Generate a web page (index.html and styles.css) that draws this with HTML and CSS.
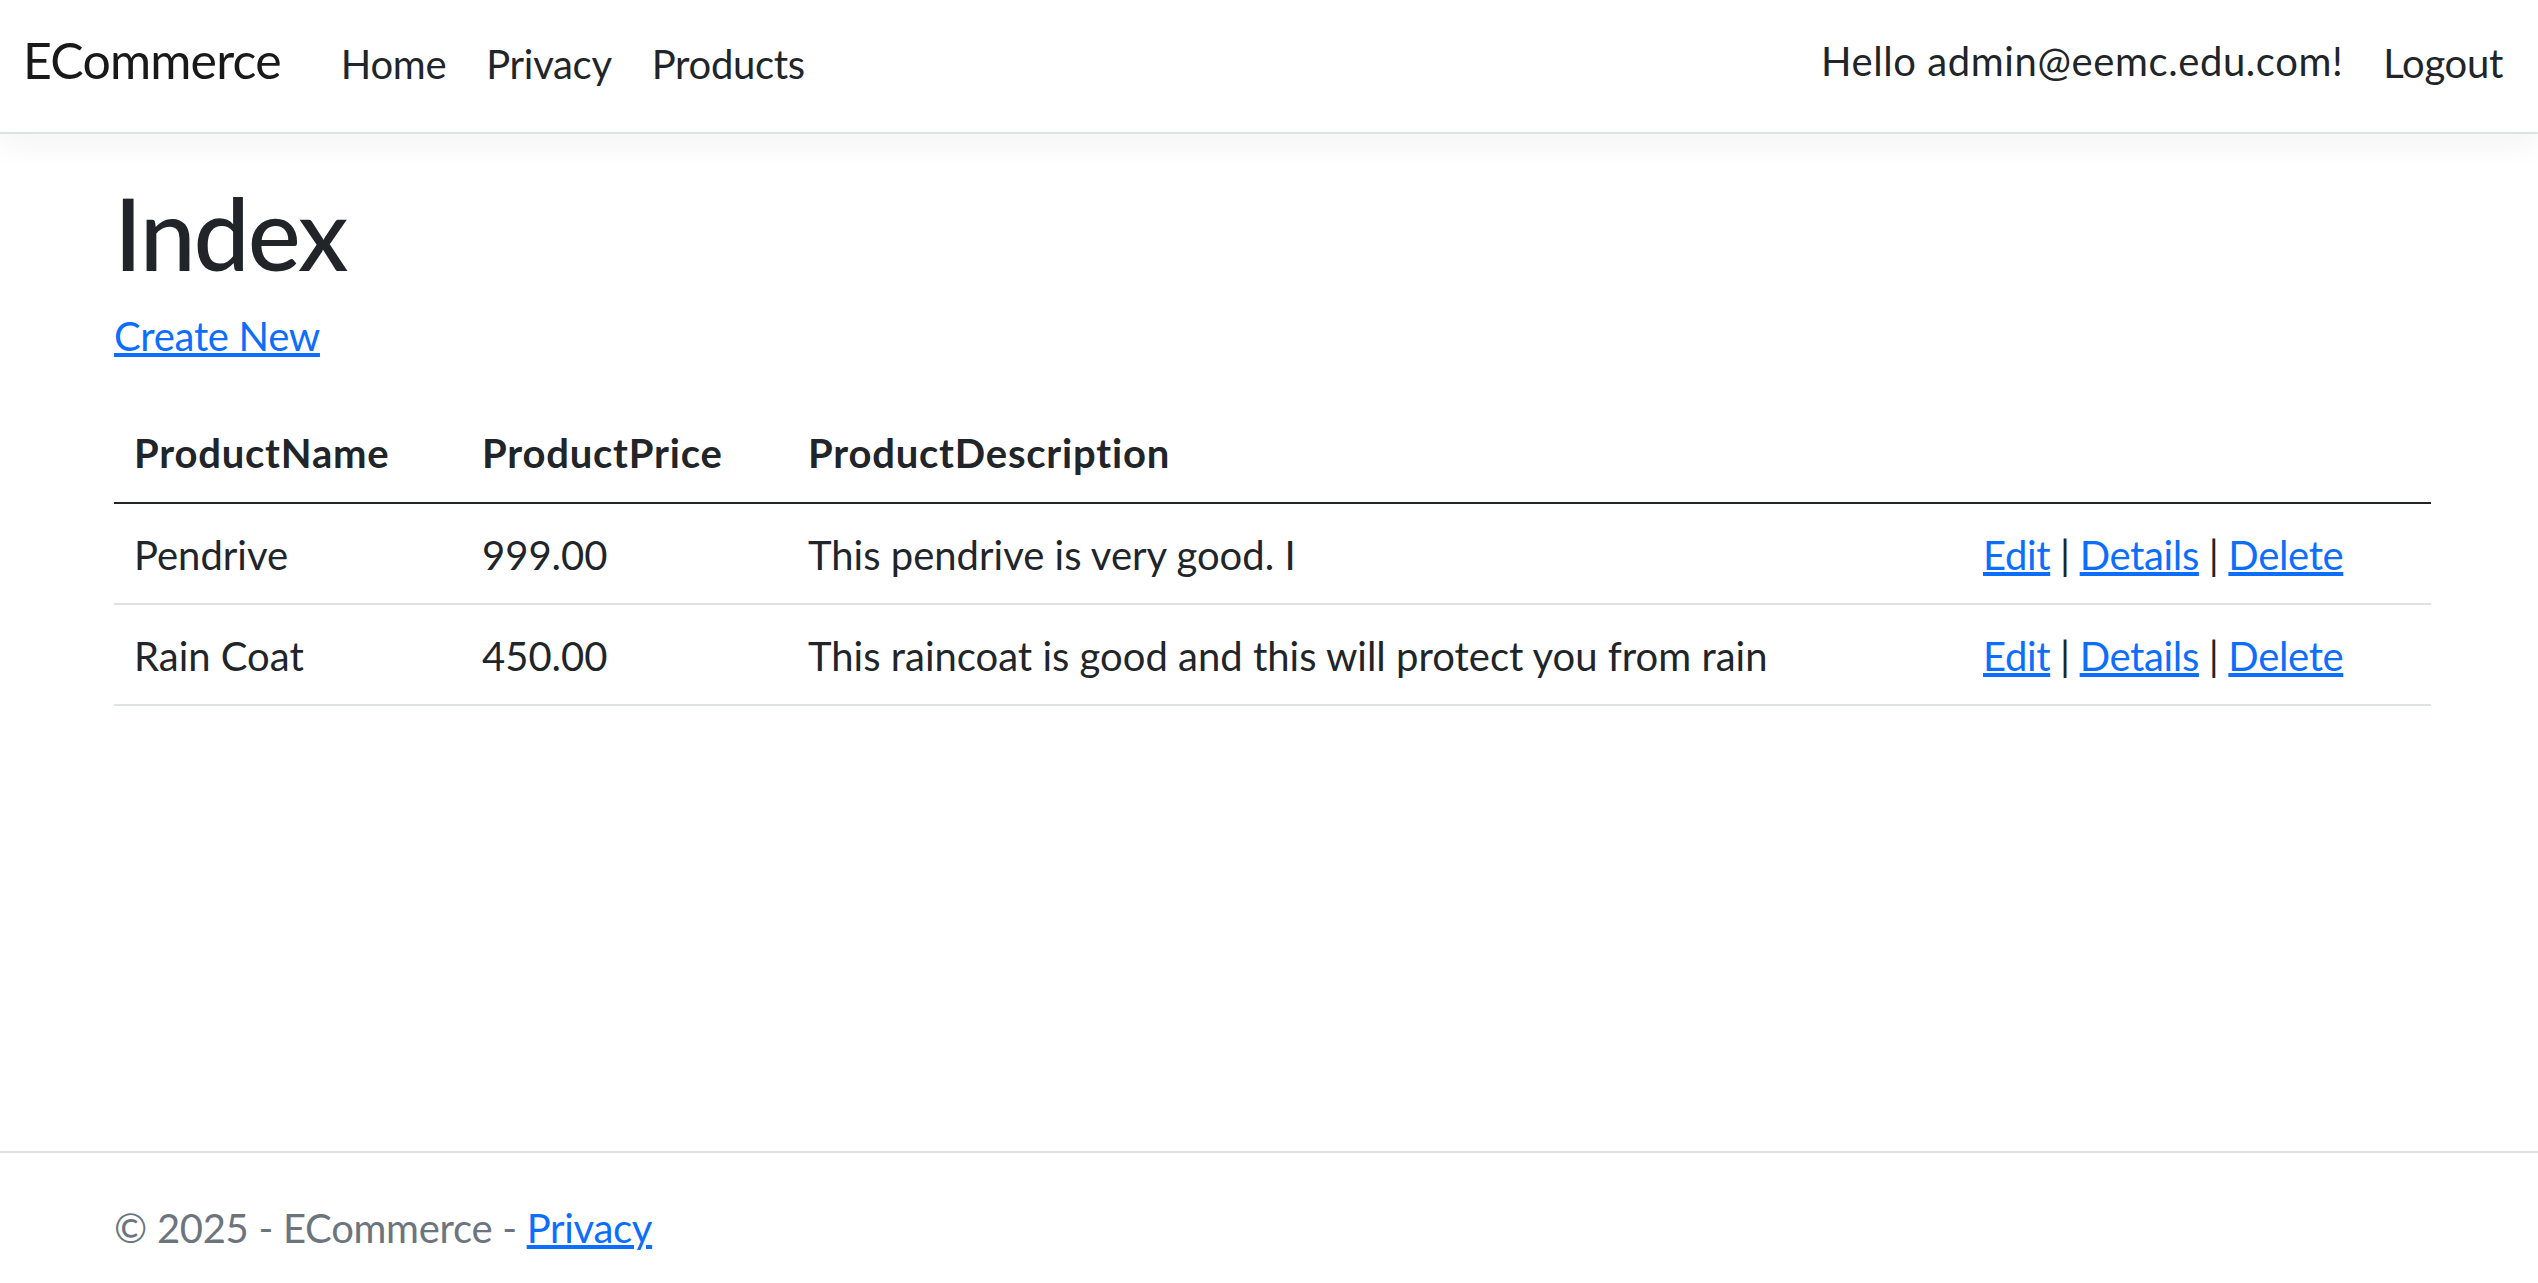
FILE: index.html
```html
<!DOCTYPE html>
<html lang="en">
<head>
<meta charset="utf-8">
<title>Index - ECommerce</title>
<link rel="stylesheet" href="styles.css">
</head>
<body>
<header class="navbar">
  <div class="nav-left">
    <a class="brand" href="#">ECommerce</a>
    <nav class="nav-links">
      <a class="nav-link" href="#">Home</a>
      <a class="nav-link" href="#">Privacy</a>
      <a class="nav-link" href="#">Products</a>
    </nav>
  </div>
  <div class="nav-right">
    <span class="nav-link greeting">Hello admin@eemc.edu.com!</span>
    <button class="nav-link logout" type="button">Logout</button>
  </div>
</header>
<main class="content">
  <h1 class="page-title">Index</h1>
  <p class="create"><a href="#">Create New</a></p>
  <table class="table">
    <colgroup>
      <col class="c-name">
      <col class="c-price">
      <col class="c-desc">
      <col class="c-actions">
    </colgroup>
    <thead>
      <tr>
        <th>ProductName</th>
        <th>ProductPrice</th>
        <th>ProductDescription</th>
        <th></th>
      </tr>
    </thead>
    <tbody>
      <tr>
        <td>Pendrive</td>
        <td>999.00</td>
        <td>This pendrive is very good. I</td>
        <td class="actions"><a href="#">Edit</a> | <a href="#">Details</a> | <a href="#">Delete</a></td>
      </tr>
      <tr>
        <td>Rain Coat</td>
        <td>450.00</td>
        <td>This raincoat is good and this will protect you from rain</td>
        <td class="actions"><a href="#">Edit</a> | <a href="#">Details</a> | <a href="#">Delete</a></td>
      </tr>
    </tbody>
  </table>
</main>
<footer class="footer">
  <div class="footer-inner">&copy; 2025 - ECommerce - <a href="#">Privacy</a></div>
</footer>
</body>
</html>
```
FILE: styles.css
```css
html, body {
  margin: 0;
  padding: 0;
}
body {
  font-family: Lato, "Open Sans", sans-serif;
  font-size: 40px;
  line-height: 60px;
  color: #212529;
  background: #fff;
  height: 100vh;
  display: flex;
  flex-direction: column;
  overflow: hidden;
}
a {
  color: #0d6efd;
}

/* navbar */
.navbar {
  position: relative;
  z-index: 2;
  height: 132px;
  box-sizing: content-box;
  border-bottom: 2px solid #dee2e6;
  box-shadow: 0 10px 30px rgba(0, 0, 0, 0.05);
  background: #fff;
  display: flex;
  justify-content: space-between;
  align-items: flex-start;
  padding: 0 15px 0 23px;
  flex-shrink: 0;
}
.nav-left, .nav-right {
  display: flex;
  align-items: baseline;
  padding-top: 23px;
}
.nav-right {
  padding-top: 31px;
}
.brand {
  font-size: 50px;
  line-height: 75px;
  letter-spacing: -0.8px;
  color: rgba(0, 0, 0, 0.9);
  text-decoration: none;
  margin-right: 40px;
}
.nav-links {
  display: flex;
  align-items: baseline;
}
.nav-link {
  display: block;
  padding: 0 20px;
  color: #212529;
  text-decoration: none;
  font: inherit;
  line-height: 60px;
  letter-spacing: -0.3px;
}
.greeting {
  letter-spacing: 0.6px;
}
.logout {
  background: none;
  border: 0;
  margin: 0;
  cursor: pointer;
  position: relative;
  top: 2px;
}

/* content */
.content {
  flex: 1;
  padding: 38px 107px 0 114px;
}
.page-title {
  font-size: 100px;
  line-height: 120px;
  font-weight: 500;
  letter-spacing: -2px;
  margin: 0 0 14px;
}
.create {
  margin: 0 0 36px;
  letter-spacing: -0.3px;
}
.table {
  width: 100%;
  border-collapse: collapse;
  table-layout: fixed;
}
.c-name { width: 348px; }
.c-price { width: 326px; }
.c-desc { width: 1175px; }
.c-actions { width: 468px; }
.table th {
  text-align: left;
  font-weight: 700;
  letter-spacing: 0.8px;
  padding: 21px 20px 19px;
  border-bottom: 2px solid #212529;
  vertical-align: bottom;
}
.table td {
  padding: 21px 20px 18px;
  border-bottom: 2px solid #dee2e6;
  vertical-align: top;
  white-space: nowrap;
}
.table td.actions {
  letter-spacing: -0.35px;
}

/* footer */
.footer {
  flex-shrink: 0;
  height: 130px;
  border-top: 2px solid #dee2e6;
  overflow: hidden;
  color: #6c757d;
}
.footer-inner {
  padding-left: 114px;
  line-height: 150px;
  white-space: nowrap;
  letter-spacing: -0.3px;
}
```
